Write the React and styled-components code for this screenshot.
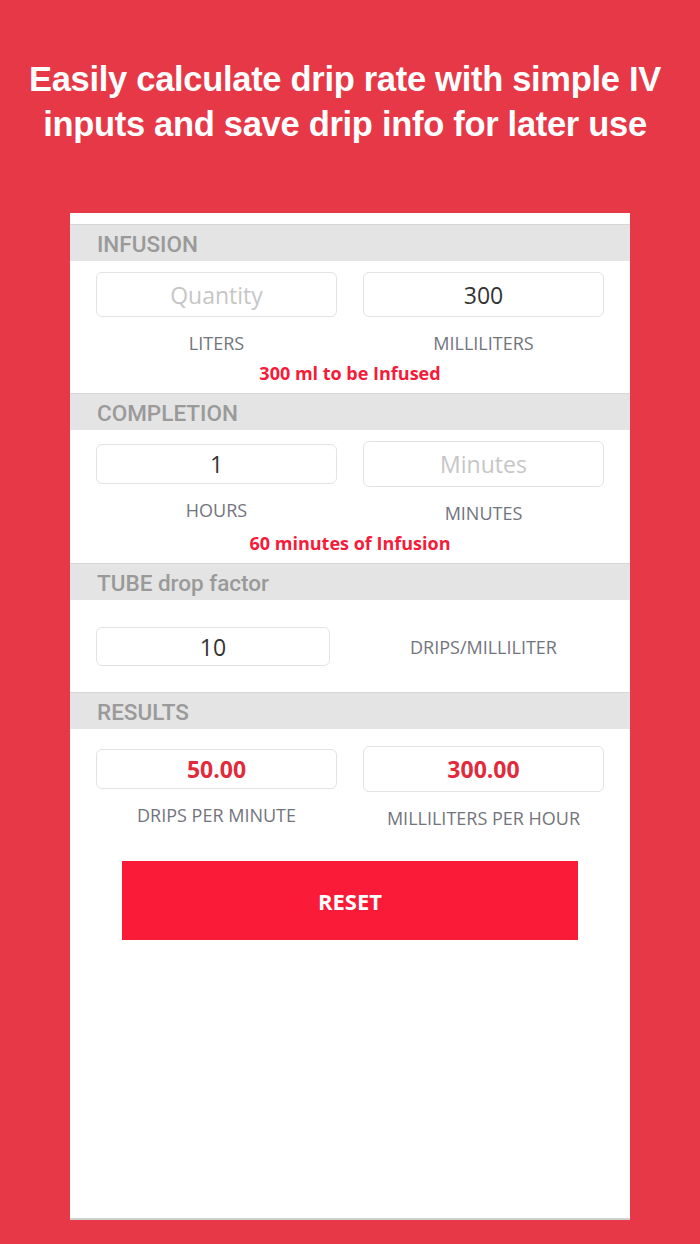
import React from 'react'
import styled, { createGlobalStyle } from 'styled-components'

const GlobalStyle = createGlobalStyle`
    html, body {
        margin: 0;
        padding: 0;
        background: #e63847;
    }
    * {
        box-sizing: border-box;
    }
`

const Page = styled.div`
    width: 700px;
    height: 1244px;
    background: #e63847;
    padding-top: 57px;
    overflow: hidden;
`

const Headline = styled.h1`
    margin: 0 10px 0 0;
    font-family: "Liberation Sans", Arial, sans-serif;
    font-weight: 700;
    font-size: 34.5px;
    letter-spacing: -0.3px;
    line-height: 45px;
    color: #fff;
    text-align: center;
`

const Card = styled.div`
    width: 560px;
    height: 1007px;
    margin: 66px auto 0;
    background: #fff;
    padding-top: 11px;
    border-bottom: 2px solid #cfcfcf;
    font-family: "Open Sans", sans-serif;
`

const SectionHeader = styled.div`
    height: 37px;
    background: #e4e4e4;
    border-top: 1px solid #d6d6d6;
    padding: 2px 0 0 27px;
    display: flex;
    align-items: center;
    font-family: Roboto, sans-serif;
    font-weight: 500;
    font-size: 22.5px;
    color: #9a9a9a;
`

const Section = styled.div`
    padding: ${p => p.$pad || '11px 26px 9px'};
`

const Pair = styled.div`
    display: grid;
    grid-template-columns: 241px 241px;
    column-gap: 26px;
    align-items: center;
`

const Field = styled.div`
    display: flex;
    flex-direction: column;
    align-items: stretch;
`

const Box = styled.div`
    height: ${p => p.$h || 45}px;
    width: ${p => p.$w ? p.$w + 'px' : 'auto'};
    border: 1px solid #e3e3e3;
    border-radius: 6px;
    display: flex;
    align-items: center;
    justify-content: center;
    font-size: 23px;
    font-weight: ${p => p.$result ? 700 : 400};
    color: ${p => p.$result ? '#e12b3c' : p.$empty ? '#c6c6c6' : '#333'};
`

const Label = styled.div`
    margin-top: ${p => p.$flush ? 0 : 15}px;
    text-align: center;
    font-size: 18px;
    line-height: 22px;
    color: #72747c;
`

const Message = styled.div`
    margin-top: 8px;
    text-align: center;
    font-size: 18px;
    line-height: 22px;
    font-weight: 700;
    color: #f51b39;
`

const ResetButton = styled.button`
    display: block;
    width: 456px;
    height: 79px;
    margin: 32px auto 0;
    border: none;
    background: #f91b37;
    color: #fff;
    font-family: "Open Sans", sans-serif;
    font-weight: 700;
    font-size: 22px;
`

function InputField({ value, placeholder, label, h, result }) {
    return (
        <Field>
            <Box $h={h} $result={result} $empty={!value}>{value || placeholder}</Box>
            <Label>{label}</Label>
        </Field>
    )
}

function App() {
    return (
        <Page>
            <GlobalStyle />
            <Headline>
                Easily calculate drip rate with simple IV<br />
                inputs and save drip info for later use
            </Headline>
            <Card>
                <SectionHeader>INFUSION</SectionHeader>
                <Section>
                    <Pair>
                        <InputField placeholder="Quantity" label="LITERS" h={45} />
                        <InputField value="300" label="MILLILITERS" h={45} />
                    </Pair>
                    <Message>300 ml to be Infused</Message>
                </Section>

                <SectionHeader>COMPLETION</SectionHeader>
                <Section>
                    <Pair>
                        <InputField value="1" label="HOURS" h={40} />
                        <InputField placeholder="Minutes" label="MINUTES" h={46} />
                    </Pair>
                    <Message>60 minutes of Infusion</Message>
                </Section>

                <SectionHeader>TUBE drop factor</SectionHeader>
                <Section $pad="27px 26px 26px">
                    <Pair>
                        <Box $h={39} $w={234}>10</Box>
                        <Label $flush>DRIPS/MILLILITER</Label>
                    </Pair>
                </Section>

                <SectionHeader>RESULTS</SectionHeader>
                <Section $pad="17px 26px 0">
                    <Pair>
                        <InputField value="50.00" label="DRIPS PER MINUTE" h={40} result />
                        <InputField value="300.00" label="MILLILITERS PER HOUR" h={46} result />
                    </Pair>
                </Section>
                <ResetButton>RESET</ResetButton>
            </Card>
        </Page>
    )
}

export default App
